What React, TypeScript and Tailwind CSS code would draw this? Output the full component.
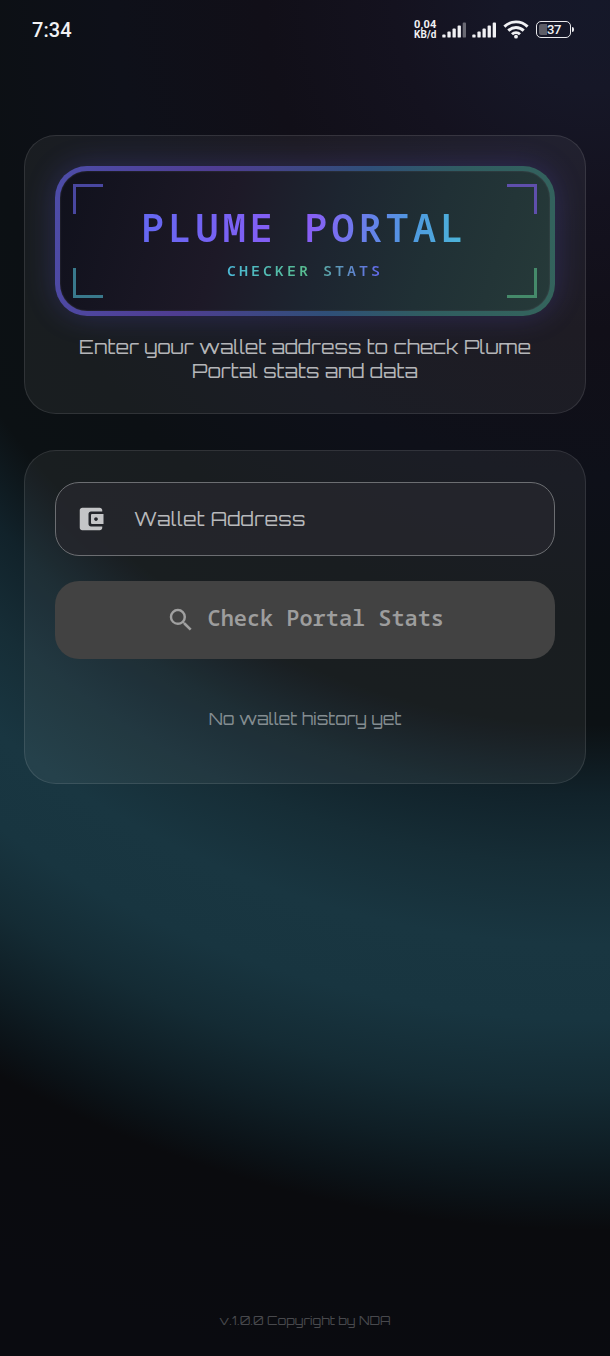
import type { ReactNode } from 'react';

function SignalBars({ dimLast = false }: { dimLast?: boolean }) {
  const heights = [3, 6, 9, 12, 15];
  return (
    <svg width="25" height="16" viewBox="0 0 25 16" fill="#f1f1f4">
      {heights.map((h, i) => (
        <rect
          key={h}
          x={0.3 + i * 5.1}
          y={15.6 - h}
          width="3.3"
          height={h}
          rx="0.9"
          opacity={dimLast && i === 4 ? 0.38 : 1}
        />
      ))}
    </svg>
  );
}

function WifiIcon() {
  return (
    <svg width="26" height="20" viewBox="0 0 26 20" fill="none" stroke="#f1f1f4" strokeWidth="2.9">
      <path d="M1.4 6.6a16.6 16.6 0 0 1 23.2 0" />
      <path d="M5.3 10.6a11 11 0 0 1 15.4 0" />
      <path d="M9 14.3a5.8 5.8 0 0 1 8 0" />
      <circle cx="13" cy="16.7" r="1.9" fill="#f1f1f4" stroke="none" />
    </svg>
  );
}

function Battery({ level }: { level: number }) {
  return (
    <div className="flex items-center gap-px">
      <div className="flex h-[17px] w-[35px] items-center rounded-[5px] border-[1.5px] border-[#e9e9ec] p-[2px]">
        <div className="h-full w-[8px] rounded-l-[2px] bg-[#5d5d66]" />
        <span className="font-['Roboto'] text-[13px] leading-none font-medium tracking-[-0.3px] text-[#f1f1f4]">
          {level}
        </span>
      </div>
      <div className="h-[5px] w-[2px] rounded-r-sm bg-[#e9e9ec]" />
    </div>
  );
}

function StatusBar() {
  return (
    <header className="flex h-[60px] items-center justify-between pr-9 pl-8">
      <time className="font-['Roboto'] text-[20px] leading-none font-medium tracking-[0.1px] text-[#f1f1f4]">7:34</time>
      <div className="-mt-px flex items-center">
        <div className="mr-[5px] w-[23px] font-['Roboto'] text-[11px] leading-[10px] font-bold text-[#f1f1f4]">
          <div className="tracking-[0.2px]">0,04</div>
          <div className="text-[10px] tracking-[0.1px]">KB/d</div>
        </div>
        <SignalBars dimLast />
        <span className="w-[5px]" />
        <SignalBars />
        <span className="w-[6px]" />
        <WifiIcon />
        <span className="w-[7px]" />
        <Battery level={37} />
      </div>
    </header>
  );
}

function Card({ className, children }: { className: string; children: ReactNode }) {
  return (
    <section className={`rounded-[32px] border border-white/10 bg-white/[0.055] px-[30px] ${className}`}>{children}</section>
  );
}

function Banner() {
  return (
    <div className="h-[150px] rounded-[32px] bg-[linear-gradient(106.7deg,#4d4da9,#4f3d92_30%,#2f4f78_58%,#305d60_76%,#34645c)] p-[5px] shadow-[0_0_30px_rgba(99,90,241,0.24)]">
      <div className="relative flex h-full flex-col items-center rounded-[27px] bg-[linear-gradient(106.7deg,#10111c,#1d1927_34%,#1d2530_54%,#203035_74%,#263a39)] pt-[30px] shadow-[inset_0_0_2px_rgba(120,120,130,0.45)]">
        <span className="absolute top-[13px] left-[13px] size-[30px] border-t-3 border-l-3 border-[#4947a0]" />
        <span className="absolute top-[13px] right-[13px] size-[30px] border-t-3 border-r-3 border-[#5f4fac]" />
        <span className="absolute bottom-[13px] left-[13px] size-[30px] border-b-3 border-l-3 border-[#39798c]" />
        <span className="absolute right-[13px] bottom-[13px] size-[30px] border-r-3 border-b-3 border-[#458a6a]" />
        <h1 className="mr-[2px] bg-[linear-gradient(96deg,#6468f1,#8b5cf6_50%,#4f98e0_82%,#4cb8d8)] bg-clip-text font-['Noto_Sans_Mono','DejaVu_Sans_Mono',monospace] text-[39px] leading-[52px] font-[570] tracking-[3.8px] text-transparent">
          PLUME PORTAL
        </h1>
        <p className="mt-[7px] bg-[linear-gradient(90deg,#4bb8d6,#58bd91_50%,#6366f1)] bg-clip-text font-['Noto_Sans_Mono','DejaVu_Sans_Mono',monospace] text-[15px] leading-[20px] font-[570] tracking-[3px] text-transparent">
          CHECKER STATS
        </p>
      </div>
    </div>
  );
}

function WalletIcon() {
  return (
    <svg className="size-[30px]" viewBox="0 0 24 24" fill="#c4c5c7">
      <path d="M10 16V8c0-1.1.89-2 2-2h9V5c0-1.1-.9-2-2-2H5c-1.11 0-2 .9-2 2v14c0 1.1.89 2 2 2h14c1.1 0 2-.9 2-2v-1h-9c-1.11 0-2-.9-2-2zm3-8c-.55 0-1 .45-1 1v6c0 .55.45 1 1 1h9V8h-9zm3 5.5c-.83 0-1.5-.67-1.5-1.5s.67-1.5 1.5-1.5 1.5.67 1.5 1.5-.67 1.5-1.5 1.5z" />
    </svg>
  );
}

function SearchIcon() {
  return (
    <svg className="size-[30px]" viewBox="0 0 24 24" fill="#a0a0a0">
      <path d="M15.5 14h-.79l-.28-.27A6.471 6.471 0 0 0 16 9.5 6.5 6.5 0 1 0 9.5 16c1.61 0 3.09-.59 4.23-1.57l.27.28v.79l5 4.99L20.49 19l-4.99-5zm-6 0C7.01 14 5 11.99 5 9.5S7.01 5 9.5 5 14 7.01 14 9.5 11.99 14 9.5 14z" />
    </svg>
  );
}

export default function App() {
  return (
    <main className="flex h-[1356px] w-[610px] flex-col bg-[#0a0b0f] bg-[radial-gradient(circle_at_595px_0px,#151829_0px,#161727_90px,#14121f_200px,#110f18_330px,#0e1019_480px,#0c1014_620px,#0c1114_725px,#11222a_795px,#162d36_865px,#193641_945px,#183540_1020px,#142b34_1090px,#0f1e25_1150px,#0b1217_1200px,#0a0b0e_1230px,#0a0b10_1400px)] font-['Orbitron','DejaVu_Sans',sans-serif]">
      <StatusBar />
      <div className="mt-[75px] flex flex-col gap-[36px] px-6">
        <Card className="h-[279px] pt-[30px]">
          <Banner />
          <p className="mt-[19px] text-center text-[19.5px] leading-[24.4px] text-[#b4b5b8]">
            Enter your wallet address to check Plume
            <br />
            Portal stats and data
          </p>
        </Card>
        <Card className="h-[334px] pt-[31px]">
          <label className="flex h-[74px] items-center rounded-[24px] border-[1.5px] border-[#6c6e72] bg-[#26272d]/80 pl-[20px] text-[#b8b9bb]">
            <WalletIcon />
            <span className="ml-[28px] text-[19.5px] tracking-[0.35px]">Wallet Address</span>
          </label>
          <button className="mt-[24.5px] flex h-[78px] w-full items-center justify-center gap-[11.5px] rounded-[24px] bg-[#424242] font-['Noto_Sans_Mono','DejaVu_Sans_Mono',monospace] text-[21.9px] font-[560] text-[#9d9d9d]">
            <SearchIcon />
            <span className="pb-[2px]">Check Portal Stats</span>
          </button>
          <p className="mt-[49.5px] text-center text-[16.9px] leading-[22px] text-[#848d91]">No wallet history yet</p>
        </Card>
      </div>
      <footer className="mt-auto mb-[27px] text-center text-[12.7px] leading-[17px] text-[#48494d]">
        v.1.0.0 Copyright by NDA
      </footer>
    </main>
  );
}
